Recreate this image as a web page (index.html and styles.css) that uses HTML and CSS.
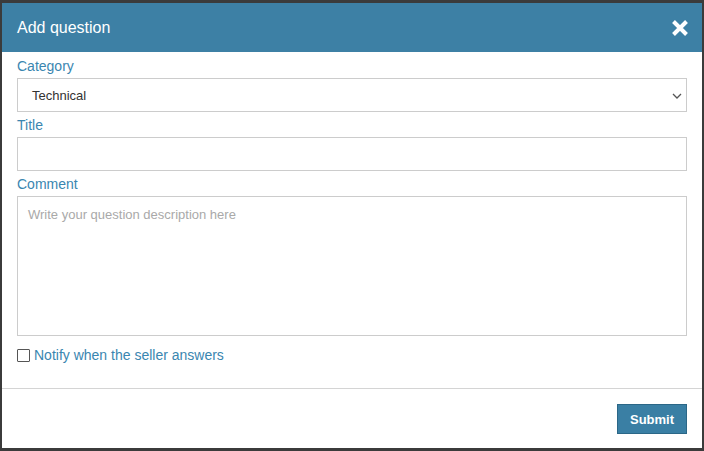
FILE: index.html
```html
<!DOCTYPE html>
<html>
<head>
<meta charset="utf-8">
<link rel="stylesheet" href="styles.css">
</head>
<body>
<div class="dialog">
  <div class="header">
    <div class="title">Add question</div>
    <svg class="close" width="18" height="18" viewBox="0 0 18 18"><path d="M2.5 2.5 L15.5 15.5 M15.5 2.5 L2.5 15.5" stroke="#fff" stroke-width="4" stroke-linecap="butt"/></svg>
  </div>
  <div class="body">
    <div class="group">
      <div class="label">Category</div>
      <div class="control select">
        <span>Technical</span>
        <svg class="chev" width="10" height="6" viewBox="0 0 10 6"><path d="M1 1 L5 5 L9 1" fill="none" stroke="#555" stroke-width="1.3"/></svg>
      </div>
    </div>
    <div class="group">
      <div class="label">Title</div>
      <div class="control"></div>
    </div>
    <div class="group">
      <div class="label">Comment</div>
      <div class="control textarea">Write your question description here</div>
    </div>
    <div class="check">
      <span class="box"></span>
      <span class="check-label">Notify when the seller answers</span>
    </div>
  </div>
  <div class="footer">
    <div class="btn">Submit</div>
  </div>
</div>
</body>
</html>
```
FILE: styles.css
```css
html, body {
  margin: 0;
  padding: 0;
  background: #3b3b3b;
  font-family: "Liberation Sans", Arial, sans-serif;
}
body {
  padding: 3px 0 0 2px;
  height: 451px;
  box-sizing: border-box;
  overflow: hidden;
}
.dialog {
  width: 700px;
  height: 445px;
  background: #fff;
  display: flex;
  flex-direction: column;
}
.header {
  height: 49px;
  background: #3d80a5;
  display: flex;
  align-items: center;
  justify-content: space-between;
  padding: 0 13px 0 15px;
  box-sizing: border-box;
}
.title {
  color: #fff;
  font-size: 16px;
}
.close {
  display: block;
  margin-top: 1px;
}
.body {
  padding: 4px 15px 0 15px;
  flex: 1;
}
.group {
  margin-bottom: 3px;
}
.label {
  color: #3a86b0;
  font-size: 14px;
  line-height: 20px;
  margin-bottom: 2px;
}
.control {
  height: 34px;
  border: 1px solid #cccccc;
  box-sizing: border-box;
}
.select {
  display: flex;
  align-items: center;
  justify-content: space-between;
  padding: 0 4px 0 14px;
  font-size: 13px;
  color: #333;
}
.chev {
  display: block;
  margin-top: 1px;
}
.textarea {
  height: 140px;
  padding: 10px 10px;
  font-size: 13px;
  line-height: 15px;
  color: #a9a9a9;
}
.check {
  display: flex;
  align-items: center;
  margin-top: 9px;
  height: 20px;
}
.box {
  width: 13px;
  height: 13px;
  border: 1px solid #555;
  box-sizing: border-box;
  margin-right: 4px;
  border-radius: 1px;
}
.check-label {
  color: #3a86b0;
  font-size: 14px;
}
.footer {
  border-top: 1px solid #d4d4d4;
  padding: 15px 15px 14px;
  display: flex;
  justify-content: flex-end;
}
.btn {
  width: 70px;
  height: 30px;
  box-sizing: border-box;
  background: #3a7fa4;
  border: 1px solid #2b6787;
  color: #fff;
  font-weight: bold;
  font-size: 13px;
  display: flex;
  align-items: center;
  justify-content: center;
}
```
